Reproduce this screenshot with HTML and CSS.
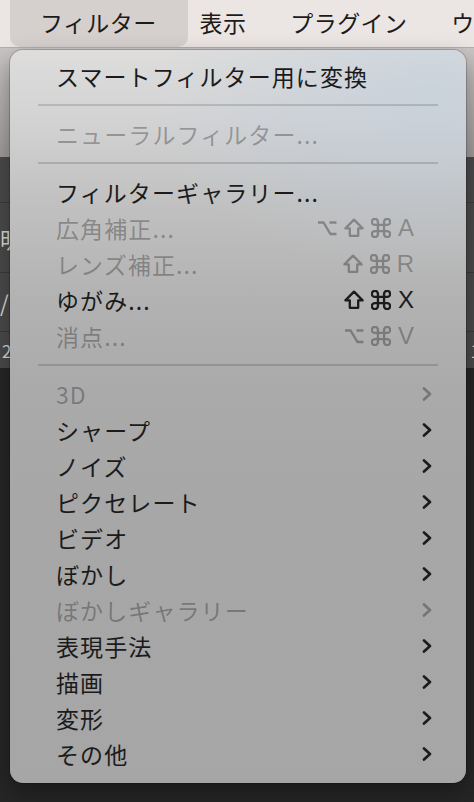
FILE: index.html
```html
<!DOCTYPE html>
<html lang="ja">
<head>
<meta charset="utf-8">
<title>フィルター</title>
<link rel="stylesheet" href="styles.css">
</head>
<body>
<div class="screen">
  <header class="menubar">
    <div class="menu-title active">フィルター</div>
    <div class="menu-title">表示</div>
    <div class="menu-title">プラグイン</div>
    <div class="menu-title">ウ</div>
  </header>

  <div class="workspace">
    <div class="options-bar"></div>
    <div class="panel-row row-a"></div>
    <div class="panel-row row-b"><span class="frag-left">明</span><span class="frag-right">ℓ</span></div>
    <div class="panel-row row-c"><span class="frag-left">/</span></div>
    <div class="panel-row row-d"><span class="frag-left small">2</span><span class="frag-right small">1</span></div>
    <div class="canvas-area"></div>
  </div>

  <div class="dropdown">
    <div class="item"><span class="label">スマートフィルター用に変換</span></div>
    <div class="sep"></div>
    <div class="item disabled"><span class="label">ニューラルフィルター...</span></div>
    <div class="sep"></div>
    <div class="item"><span class="label">フィルターギャラリー...</span></div>
    <div class="item disabled"><span class="label">広角補正...</span>
      <span class="shortcut">
        <svg class="key opt" viewBox="0 0 20 20"><path d="M1 4.5H6.5L13.5 16H19.5M12.5 4.5H19.5"/></svg>
        <svg class="key" viewBox="0 0 20 20"><path d="M10 1.6L18.6 10.4H14.2V17.8H5.8V10.4H1.4Z"/></svg>
        <svg class="key" viewBox="2.2 2.2 19.6 19.6"><path d="M15 6v12a3 3 0 1 0 3-3H6a3 3 0 1 0 3 3V6a3 3 0 1 0-3 3h12a3 3 0 1 0-3-3"/></svg>
        <span class="letter">A</span>
      </span>
    </div>
    <div class="item disabled"><span class="label">レンズ補正...</span>
      <span class="shortcut">
        <svg class="key" viewBox="0 0 20 20"><path d="M10 1.6L18.6 10.4H14.2V17.8H5.8V10.4H1.4Z"/></svg>
        <svg class="key" viewBox="2.2 2.2 19.6 19.6"><path d="M15 6v12a3 3 0 1 0 3-3H6a3 3 0 1 0 3 3V6a3 3 0 1 0-3 3h12a3 3 0 1 0-3-3"/></svg>
        <span class="letter">R</span>
      </span>
    </div>
    <div class="item"><span class="label">ゆがみ...</span>
      <span class="shortcut">
        <svg class="key" viewBox="0 0 20 20"><path d="M10 1.6L18.6 10.4H14.2V17.8H5.8V10.4H1.4Z"/></svg>
        <svg class="key" viewBox="2.2 2.2 19.6 19.6"><path d="M15 6v12a3 3 0 1 0 3-3H6a3 3 0 1 0 3 3V6a3 3 0 1 0-3 3h12a3 3 0 1 0-3-3"/></svg>
        <span class="letter">X</span>
      </span>
    </div>
    <div class="item disabled"><span class="label">消点...</span>
      <span class="shortcut">
        <svg class="key opt" viewBox="0 0 20 20"><path d="M1 4.5H6.5L13.5 16H19.5M12.5 4.5H19.5"/></svg>
        <svg class="key" viewBox="2.2 2.2 19.6 19.6"><path d="M15 6v12a3 3 0 1 0 3-3H6a3 3 0 1 0 3 3V6a3 3 0 1 0-3 3h12a3 3 0 1 0-3-3"/></svg>
        <span class="letter">V</span>
      </span>
    </div>
    <div class="sep"></div>
    <div class="item disabled"><span class="label">3D</span><svg class="chev" viewBox="0 0 10 14"><path d="M2 1.5L8 7L2 12.5"/></svg></div>
    <div class="item"><span class="label">シャープ</span><svg class="chev" viewBox="0 0 10 14"><path d="M2 1.5L8 7L2 12.5"/></svg></div>
    <div class="item"><span class="label">ノイズ</span><svg class="chev" viewBox="0 0 10 14"><path d="M2 1.5L8 7L2 12.5"/></svg></div>
    <div class="item"><span class="label">ピクセレート</span><svg class="chev" viewBox="0 0 10 14"><path d="M2 1.5L8 7L2 12.5"/></svg></div>
    <div class="item"><span class="label">ビデオ</span><svg class="chev" viewBox="0 0 10 14"><path d="M2 1.5L8 7L2 12.5"/></svg></div>
    <div class="item"><span class="label">ぼかし</span><svg class="chev" viewBox="0 0 10 14"><path d="M2 1.5L8 7L2 12.5"/></svg></div>
    <div class="item disabled"><span class="label">ぼかしギャラリー</span><svg class="chev" viewBox="0 0 10 14"><path d="M2 1.5L8 7L2 12.5"/></svg></div>
    <div class="item"><span class="label">表現手法</span><svg class="chev" viewBox="0 0 10 14"><path d="M2 1.5L8 7L2 12.5"/></svg></div>
    <div class="item"><span class="label">描画</span><svg class="chev" viewBox="0 0 10 14"><path d="M2 1.5L8 7L2 12.5"/></svg></div>
    <div class="item"><span class="label">変形</span><svg class="chev" viewBox="0 0 10 14"><path d="M2 1.5L8 7L2 12.5"/></svg></div>
    <div class="item"><span class="label">その他</span><svg class="chev" viewBox="0 0 10 14"><path d="M2 1.5L8 7L2 12.5"/></svg></div>
  </div>
</div>
</body>
</html>
```

FILE: styles.css
```css
* { box-sizing: border-box; }

html, body {
  margin: 0;
  padding: 0;
}

body {
  width: 474px;
  height: 802px;
  overflow: hidden;
  background: #262626;
  font-family: "Noto Sans CJK JP", "Noto Sans", sans-serif;
  color: #1b1b1b;
}

.screen {
  position: relative;
  width: 474px;
  height: 802px;
  overflow: hidden;
}

/* ---------- menu bar ---------- */
.menubar {
  height: 48px;
  display: flex;
  align-items: stretch;
  gap: 44px;
  padding-left: 10px;
  background: #ebe5e3;
  border-bottom: 1px solid #b3aeac;
  font-size: 23px;
  letter-spacing: 0.4px;
  white-space: nowrap;
}

.menu-title {
  display: flex;
  align-items: center;
  height: 47px;
  padding-bottom: 3px;
}

.menu-title.active {
  padding: 0 31px 3px 30px;
  margin-right: -32px;
  background: #d5cfcd;
  border-radius: 0 0 10px 10px;
}

/* ---------- background app ---------- */
.workspace {
  display: flex;
  flex-direction: column;
}

.options-bar {
  height: 109px;
  background: linear-gradient(180deg, #c9c5c4 0%, #b4b0af 50%, #9f9c9b 100%);
}

.panel-row {
  display: flex;
  justify-content: space-between;
  align-items: center;
  background: #4a4a4a;
  border-bottom: 1px solid #3a3a3a;
  color: #d8d8d8;
  font-size: 22px;
}

.row-a { height: 46px; }
.row-b { height: 70px; }
.row-c { height: 59px; }
.row-d { height: 36px; border-bottom: none; }

.frag-left { margin-left: 0; }
.frag-right { margin-right: -12px; font-style: italic; }
.frag-left.small, .frag-right.small { font-size: 17px; }
.frag-left.small { margin-left: 2px; }
.frag-right.small { margin-right: -6px; font-style: normal; }

.canvas-area {
  height: 434px;
  background: #262626;
}

/* ---------- dropdown ---------- */
.dropdown {
  position: absolute;
  top: 50px;
  left: 10px;
  width: 456px;
  padding: 8px 0 11px;
  border-radius: 13px;
  background:
    radial-gradient(ellipse 60% 25% at 92% 6%, rgba(190, 206, 222, 0.55), rgba(190, 206, 222, 0) 100%),
    linear-gradient(180deg, #dedddc 0px, #d3d3d4 70px, #c1c1c1 150px, #b2b2b2 250px, #aaaaaa 340px, #a7a7a7 450px, #a6a6a6 100%);
  box-shadow: 0 0 0 1px rgba(0, 0, 0, 0.18), 0 10px 24px rgba(0, 0, 0, 0.35);
  font-size: 23px;
  letter-spacing: 1.1px;
}

.item {
  display: flex;
  align-items: center;
  height: 36px;
  padding: 0 34px 0 46px;
  white-space: nowrap;
  color: #1b1b1b;
}

.item .label {
  flex: 1;
  line-height: 36px;
}

.item.disabled {
  color: rgba(0, 0, 0, 0.3);
}

.sep {
  height: 2px;
  margin: 10px 28px;
  background: rgba(0, 0, 0, 0.14);
}

.shortcut {
  display: flex;
  align-items: center;
  gap: 7px;
  margin-right: 18px;
}

.key {
  width: 20px;
  height: 20px;
  fill: none;
  stroke: currentColor;
  stroke-width: 2.3;
  stroke-linejoin: round;
}

.key.opt {
  stroke-linejoin: miter;
}

.letter {
  font-family: "Liberation Sans", "DejaVu Sans", sans-serif;
  font-size: 24px;
  letter-spacing: 0;
  line-height: 36px;
}

.chev {
  width: 10px;
  height: 14px;
  fill: none;
  stroke: currentColor;
  stroke-width: 2.6;
  stroke-linecap: round;
  stroke-linejoin: round;
}
```
